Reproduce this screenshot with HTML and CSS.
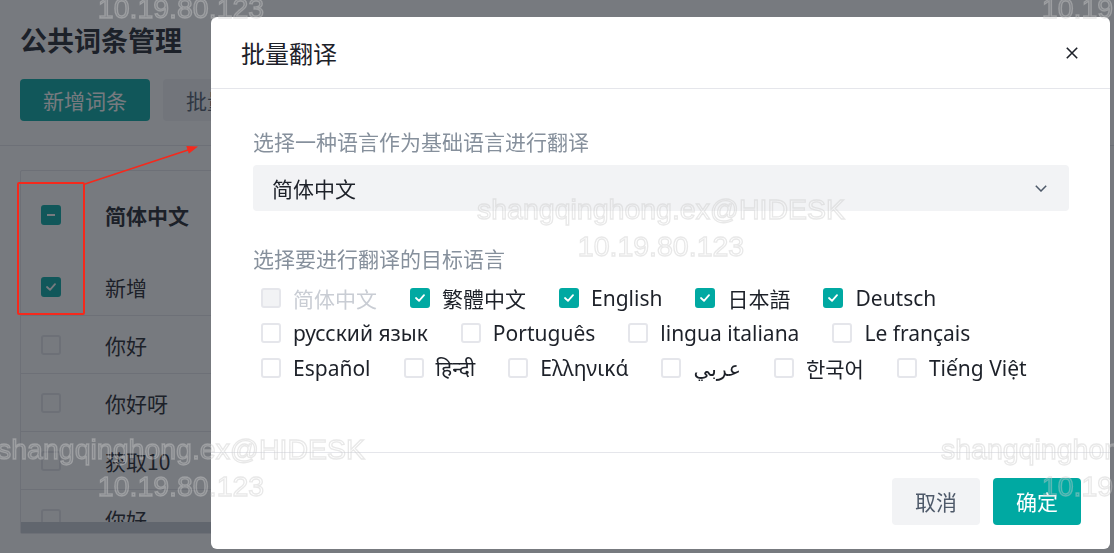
FILE: index.html
```html
<!DOCTYPE html>
<html lang="zh-CN">
<head>
<meta charset="utf-8">
<title>公共词条管理</title>
<link rel="stylesheet" href="styles.css">
</head>
<body>
<div class="page">
  <header class="page-header">
    <h1 class="page-title">公共词条管理</h1>
    <div class="toolbar">
      <button class="btn btn-primary">新增词条</button>
      <button class="btn btn-secondary">批量翻译</button>
    </div>
  </header>
  <main class="page-content">
    <div class="table">
      <div class="table-scroll">
        <div class="tr th">
          <span class="cell-check"><span class="cb cb-indeterminate"></span></span>
          <span class="cell-text">简体中文</span>
        </div>
        <div class="tr">
          <span class="cell-check"><span class="cb cb-checked"><svg viewBox="0 0 10 8" class="tick"><polyline points="1,4 4,6.8 9,1.2"/></svg></span></span>
          <span class="cell-text">新增</span>
        </div>
        <div class="tr">
          <span class="cell-check"><span class="cb"></span></span>
          <span class="cell-text">你好</span>
        </div>
        <div class="tr">
          <span class="cell-check"><span class="cb"></span></span>
          <span class="cell-text">你好呀</span>
        </div>
        <div class="tr">
          <span class="cell-check"><span class="cb"></span></span>
          <span class="cell-text">获取10</span>
        </div>
        <div class="tr">
          <span class="cell-check"><span class="cb"></span></span>
          <span class="cell-text">你好</span>
        </div>
      </div>
      <div class="table-scrollbar"></div>
    </div>
  </main>
</div>

<div class="mask"></div>

<div class="modal" role="dialog">
  <div class="modal-header">
    <span class="modal-title">批量翻译</span>
    <svg class="modal-close" viewBox="0 0 12 12"><path d="M0.8 0.8 L11.2 11.2 M11.2 0.8 L0.8 11.2"/></svg>
  </div>
  <div class="modal-body">
    <div class="field-label">选择一种语言作为基础语言进行翻译</div>
    <div class="select">
      <span class="select-value">简体中文</span>
      <svg class="select-arrow" viewBox="0 0 12 7"><polyline points="0.8,0.8 6,6 11.2,0.8"/></svg>
    </div>
    <div class="field-label field-label-2">选择要进行翻译的目标语言</div>
    <div class="check-group">
      <label class="check disabled"><span class="cb"></span><span>简体中文</span></label>
      <label class="check"><span class="cb cb-checked"><svg viewBox="0 0 10 8" class="tick"><polyline points="1,4 4,6.8 9,1.2"/></svg></span><span>繁體中文</span></label>
      <label class="check"><span class="cb cb-checked"><svg viewBox="0 0 10 8" class="tick"><polyline points="1,4 4,6.8 9,1.2"/></svg></span><span>English</span></label>
      <label class="check"><span class="cb cb-checked"><svg viewBox="0 0 10 8" class="tick"><polyline points="1,4 4,6.8 9,1.2"/></svg></span><span>日本語</span></label>
      <label class="check"><span class="cb cb-checked"><svg viewBox="0 0 10 8" class="tick"><polyline points="1,4 4,6.8 9,1.2"/></svg></span><span>Deutsch</span></label>
      <label class="check"><span class="cb"></span><span>русский язык</span></label>
      <label class="check"><span class="cb"></span><span>Português</span></label>
      <label class="check"><span class="cb"></span><span>lingua italiana</span></label>
      <label class="check"><span class="cb"></span><span>Le français</span></label>
      <label class="check"><span class="cb"></span><span>Español</span></label>
      <label class="check"><span class="cb"></span><span class="hindi">हिन्दी</span></label>
      <label class="check"><span class="cb"></span><span>Ελληνικά</span></label>
      <label class="check"><span class="cb"></span><span class="arabic">عربي</span></label>
      <label class="check"><span class="cb"></span><span class="korean">한국어</span></label>
      <label class="check"><span class="cb"></span><span>Tiếng Việt</span></label>
    </div>
  </div>
  <div class="modal-footer">
    <button class="btn btn-secondary btn-cancel">取消</button>
    <button class="btn btn-primary">确定</button>
  </div>
</div>

<div class="annot-box"></div>
<svg class="annot-arrow" viewBox="0 0 1114 553">
  <line x1="85" y1="184" x2="188" y2="150"/>
  <polygon points="198,146.5 188.8,153.7 186.3,146.1"/>
</svg>

<div class="watermarks">
  <div class="wm wm-1"><div>shangqinghong.ex@HIDESK</div><div>10.19.80.123</div></div>
  <div class="wm wm-2"><div>shangqinghong.ex@HIDESK</div><div>10.19.80.123</div></div>
  <div class="wm wm-3"><div>shangqinghong.ex@HIDESK</div><div>10.19.80.123</div></div>
  <div class="wm wm-4"><div>shangqinghong.ex@HIDESK</div><div>10.19.80.123</div></div>
  <div class="wm wm-5"><div>shangqinghong.ex@HIDESK</div><div>10.19.80.123</div></div>
</div>
</body>
</html>
```

FILE: styles.css
```css
* { box-sizing: border-box; }

html, body {
  margin: 0;
  padding: 0;
  width: 1114px;
  height: 553px;
  overflow: hidden;
  background: #ffffff;
  font-family: "Noto Sans", "Noto Sans CJK SC", "Noto Sans Devanagari", "DejaVu Sans", sans-serif;
  font-size: 21px;
  color: #1d2129;
}

button {
  font-family: inherit;
  font-size: 21px;
  border: none;
  cursor: pointer;
}

/* ---------- background page ---------- */
.page {
  width: 1114px;
  height: 553px;
}

.page-header {
  padding: 22px 20px 24px;
  border-bottom: 1px solid #e5e6eb;
}

.page-title {
  margin: 0;
  font-size: 27px;
  line-height: 36px;
  font-weight: 700;
  font-family: "Noto Sans CJK SC", sans-serif;
}

.toolbar {
  margin-top: 21px;
  display: flex;
  gap: 13px;
}

.btn {
  height: 42px;
  padding: 0 23px;
  border-radius: 4px;
  line-height: 42px;
  font-family: "Noto Sans CJK SC", sans-serif;
}

.btn-primary {
  background: #00a9a2;
  color: #ffffff;
}

.btn-secondary {
  background: #f2f3f5;
  color: #4e5969;
}

.page-content {
  padding: 24px 20px 0;
}

.table {
  width: 1080px;
  border: 1px solid #e5e6eb;
  border-radius: 2px;
}

.table-scroll {
  height: 351px;
  overflow: hidden;
}

.tr {
  display: flex;
  align-items: center;
  height: 58px;
  border-bottom: 1px solid #e5e6eb;
}

.tr.th {
  height: 87px;
  border-bottom: none;
  font-weight: 700;
}

.cell-check {
  width: 84px;
  padding-left: 20px;
  display: flex;
  align-items: center;
}

.cell-text {
  font-family: "Noto Sans CJK SC", sans-serif;
}

.table-scrollbar {
  height: 11px;
  background: #c9cdd4;
}

/* ---------- checkbox ---------- */
.cb {
  flex: none;
  width: 20px;
  height: 20px;
  border: 2px solid #e5e6eb;
  border-radius: 3px;
  background: #ffffff;
  display: flex;
  align-items: center;
  justify-content: center;
}

.cb-checked,
.cb-indeterminate {
  background: #00a9a2;
  border-color: #00a9a2;
}

.cb-indeterminate::after {
  content: "";
  width: 8px;
  height: 2px;
  background: #ffffff;
}

.tick {
  width: 10px;
  height: 8px;
  fill: none;
  stroke: #ffffff;
  stroke-width: 1.8;
  stroke-linecap: round;
  stroke-linejoin: round;
}

/* ---------- mask ---------- */
.mask {
  position: fixed;
  inset: 0;
  background: rgba(29, 33, 41, 0.6);
}

/* ---------- modal ---------- */
.modal {
  position: absolute;
  left: 211px;
  top: 17px;
  width: 899px;
  height: 532px;
  background: #ffffff;
  border-radius: 6px;
  display: flex;
  flex-direction: column;
}

.modal-header {
  height: 72px;
  flex: none;
  border-bottom: 1px solid #e5e6eb;
  display: flex;
  align-items: center;
  justify-content: space-between;
  padding: 0 32px 0 30px;
}

.modal-title {
  font-size: 24px;
  font-family: "Noto Sans CJK SC", sans-serif;
  color: #1d2129;
}

.modal-close {
  width: 12px;
  height: 12px;
  stroke: #1d2129;
  stroke-width: 1.6;
  fill: none;
}

.modal-body {
  flex: 1;
  padding: 37px 41px 0 42px;
}

.field-label {
  line-height: 30px;
  color: #86909c;
  font-family: "Noto Sans CJK SC", sans-serif;
}

.select {
  margin-top: 9px;
  height: 46px;
  background: #f2f3f5;
  border-radius: 4px;
  display: flex;
  align-items: center;
  justify-content: space-between;
  padding: 0 22px 0 19px;
}

.select-value {
  font-family: "Noto Sans CJK SC", sans-serif;
}

.select-arrow {
  width: 12px;
  height: 7px;
  fill: none;
  stroke: #4e5969;
  stroke-width: 1.5;
}

.field-label-2 {
  margin-top: 32px;
}

.check-group {
  margin-top: 7px;
  padding-left: 8px;
  display: flex;
  flex-wrap: wrap;
  column-gap: 33px;
}

.check {
  height: 35px;
  display: flex;
  align-items: center;
  gap: 12px;
  white-space: nowrap;
}

.check.disabled .cb {
  background: #f2f3f5;
}

.check.disabled span {
  color: #c9cdd4;
}

.korean {
  font-family: "Noto Sans CJK KR", sans-serif;
}

.modal-footer {
  height: 97px;
  flex: none;
  border-top: 1px solid #e5e6eb;
  display: flex;
  align-items: center;
  justify-content: flex-end;
  gap: 13px;
  padding-right: 29px;
}

.modal-footer .btn {
  height: 47px;
  line-height: 47px;
}

/* ---------- annotation ---------- */
.annot-box {
  position: absolute;
  left: 17px;
  top: 182px;
  width: 68px;
  height: 133px;
  border: 2px solid #f5291c;
  border-radius: 2px;
}

.annot-arrow {
  position: absolute;
  left: 0;
  top: 0;
  width: 1114px;
  height: 553px;
  pointer-events: none;
}

.annot-arrow line {
  stroke: #f5291c;
  stroke-width: 1.6;
}

.annot-arrow polygon {
  fill: #f5291c;
}

/* ---------- watermarks ---------- */
.watermarks {
  position: fixed;
  inset: 0;
  pointer-events: none;
}

.wm {
  position: absolute;
  width: 420px;
  text-align: center;
  font-family: "Liberation Sans", sans-serif;
  font-size: 28.5px;
  line-height: 37px;
  color: rgba(255, 255, 255, 0.1);
  -webkit-text-stroke: 1.3px rgba(200, 200, 200, 0.42);
  white-space: nowrap;
}

.wm-1 { left: -29px; top: -47px; }
.wm-2 { left: 915px; top: -47px; }
.wm-3 { left: 451px; top: 191px; }
.wm-4 { left: -29px; top: 431px; }
.wm-5 { left: 915px; top: 431px; }
```
